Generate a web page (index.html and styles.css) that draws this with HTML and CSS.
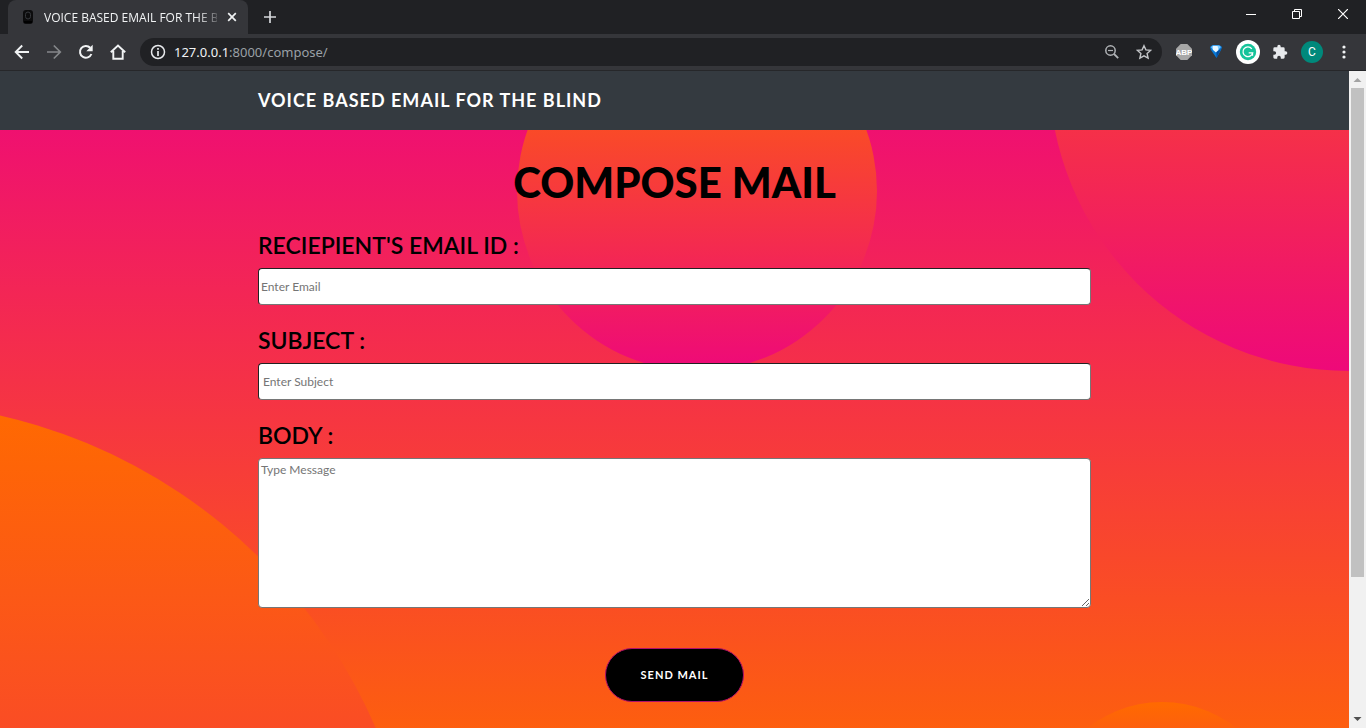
FILE: index.html
```html
<!DOCTYPE html>
<html lang="en">
<head>
<meta charset="utf-8">
<meta name="viewport" content="width=device-width, initial-scale=1">
<title>VOICE BASED EMAIL FOR THE BLIND</title>
<link rel="stylesheet" href="styles.css">
</head>
<body>
<div class="browser">
  <div class="tabstrip">
    <div class="tab">
      <svg class="favicon" width="12" height="16" viewBox="0 0 12 16"><rect x="1" y="1" width="10" height="14" rx="3" fill="#0c0c0d"/><rect x="3.500" y="3" width="5" height="7" rx="2.500" fill="none" stroke="#37393d"/><path d="M2 13h8" stroke="#000" stroke-width="2"/></svg>
      <span class="tab-title">VOICE BASED EMAIL FOR THE BLIND</span>
      <button class="icon-btn tab-close" aria-label="Close tab"><svg width="10" height="10" viewBox="0 0 10 10"><path d="M1.200 1.200l7.600 7.600M8.800 1.200l-7.600 7.600" stroke="#f1f3f4" stroke-width="1.700"/></svg></button>
    </div>
    <button class="icon-btn new-tab" aria-label="New tab"><svg width="12" height="12" viewBox="0 0 12 12"><path d="M6 0v12M0 6h12" stroke="#d5d7da" stroke-width="1.700"/></svg></button>
    <div class="window-controls">
      <button class="icon-btn" aria-label="Minimize"><svg width="10" height="10" viewBox="0 0 10 10"><path d="M0 5.500h10" stroke="#fff"/></svg></button>
      <button class="icon-btn" aria-label="Restore"><svg width="10" height="10" viewBox="0 0 10 10"><path d="M.5 2.500h7v7h-7zM2.500 2.500v-2h7v7h-2" fill="none" stroke="#fff"/></svg></button>
      <button class="icon-btn" aria-label="Close"><svg width="10" height="10" viewBox="0 0 10 10"><path d="M0 0l10 10M10 0L0 10" stroke="#fff" stroke-width="1.200"/></svg></button>
    </div>
  </div>
  <div class="toolbar">
    <div class="nav-buttons">
      <button class="icon-btn" aria-label="Back"><svg width="16" height="16" viewBox="0 0 16 16"><path d="M15 8H2M8.200 1.500L1.700 8l6.500 6.500" fill="none" stroke="#f1f3f4" stroke-width="1.900"/></svg></button>
      <button class="icon-btn" aria-label="Forward"><svg width="16" height="16" viewBox="0 0 16 16"><path d="M1 8h13M7.800 1.500L14.300 8l-6.500 6.500" fill="none" stroke="#85878a" stroke-width="1.700"/></svg></button>
      <button class="icon-btn" aria-label="Reload"><svg width="16" height="16" viewBox="0 0 16 16"><path d="M13.400 10A5.900 5.900 0 1 1 12.200 3.800" fill="none" stroke="#f1f3f4" stroke-width="2"/><path d="M14.700.8v6.400H8.300z" fill="#f1f3f4"/></svg></button>
      <button class="icon-btn" aria-label="Home"><svg width="16" height="16" viewBox="0 0 16 16"><path d="M.8 8.300L8 1.500l7.200 6.800M3.300 7v7.800h9.400V7" fill="none" stroke="#f1f3f4" stroke-width="1.900"/></svg></button>
    </div>
    <div class="omnibox">
      <svg width="16" height="16" viewBox="0 0 16 16"><circle cx="8" cy="8" r="6.500" fill="none" stroke="#e8eaed" stroke-width="1.500"/><path d="M8 7v5M8 4v1.700" stroke="#e8eaed" stroke-width="1.700"/></svg>
      <span class="url"><span class="url-host">127.0.0.1</span>:8000/compose/</span>
      <button class="icon-btn" aria-label="Zoom"><svg width="16" height="16" viewBox="0 0 16 16"><circle cx="6.500" cy="6.500" r="4.700" fill="none" stroke="#b0b3b6" stroke-width="1.500"/><path d="M10 10l4.200 4.200" stroke="#b0b3b6" stroke-width="1.800"/><path d="M4 6.500h5" stroke="#b0b3b6" stroke-width="1.200"/></svg></button>
      <button class="icon-btn" aria-label="Bookmark"><svg width="16" height="16" viewBox="0 0 16 16"><path d="M8 1.700l1.900 4.200 4.700.5-3.500 3.100 1 4.600L8 11.800l-4.100 2.300 1-4.600-3.500-3.100 4.700-.5z" fill="none" stroke="#c3c5c8" stroke-width="1.400"/></svg></button>
    </div>
    <div class="extensions">
      <button class="icon-btn" aria-label="ABP"><svg width="16" height="16" viewBox="0 0 16 16"><path d="M4.700 0h6.600L16 4.700v6.600L11.300 16H4.700L0 11.300V4.700z" fill="#a7a7a7"/><text class="abp" x="8" y="11" text-anchor="middle">ABP</text></svg></button>
      <button class="icon-btn" aria-label="Diamond extension"><svg width="16" height="16" viewBox="0 0 16 16"><path d="M2 3l2.500-2h7L14 3l-1 3-4.500 8L3 6z" fill="#0879d7"/><path d="M3 3l2-1.500h6L13 3l-3 3H5z" fill="#7ecbff"/><path d="M5 2h4.500l1 4L8 8.500 5 6z" fill="#e7f6ff"/><path d="M8.500 8L13 5l-4.500 9z" fill="#034b9d"/></svg></button>
      <button class="icon-btn" aria-label="Grammar"><svg width="24" height="24" viewBox="0 0 24 24"><circle cx="12" cy="12" r="12" fill="#fff"/><circle cx="12" cy="12" r="8.200" fill="#15c39a"/><path d="M15.800 8.800a4.900 4.900 0 1 0 .9 4h-4M16.500 12.500v3.300" fill="none" stroke="#fff" stroke-width="1.300"/></svg></button>
      <button class="icon-btn" aria-label="Extensions"><svg width="16" height="16" viewBox="0 0 24 24"><path d="M20.500 11H19V7a2 2 0 0 0-2-2h-4V3.500a2.500 2.500 0 0 0-5 0V5H4a2 2 0 0 0-2 2v3.800h1.500a2.700 2.700 0 0 1 0 5.400H2V20a2 2 0 0 0 2 2h3.800v-1.500a2.700 2.700 0 0 1 5.400 0V22H17a2 2 0 0 0 2-2v-4h1.500a2.500 2.500 0 0 0 0-5z" fill="#e8eaed"/></svg></button>
      <button class="icon-btn" aria-label="Profile"><span class="avatar">C</span></button>
      <button class="icon-btn" aria-label="Menu"><svg width="16" height="16" viewBox="0 0 16 16"><g fill="#f1f3f4"><circle cx="8" cy="3" r="1.600"/><circle cx="8" cy="8" r="1.600"/><circle cx="8" cy="13" r="1.600"/></g></svg></button>
    </div>
  </div>
  <div class="viewport">
    <div class="page">
      <header class="navbar"><div class="container"><a class="brand" href="#">VOICE BASED EMAIL FOR THE BLIND</a></div></header>
      <main class="masthead">
        <div class="circle circle-1"></div>
        <div class="circle circle-2"></div>
        <div class="circle circle-3"></div>
        <div class="circle circle-4"></div>
        <form class="container compose">
          <h1 class="title">COMPOSE MAIL</h1>
          <div class="field">
            <label class="label" for="email">RECIEPIENT'S EMAIL ID :</label>
            <input class="control" id="email" type="email" placeholder="Enter Email">
          </div>
          <div class="field">
            <label class="label" for="subject">SUBJECT :</label>
            <input class="control control-subject" id="subject" type="text" placeholder="Enter Subject">
          </div>
          <div class="field">
            <label class="label" for="body">BODY :</label>
            <textarea class="control control-body" id="body" placeholder="Type Message"></textarea>
          </div>
          <button class="send" type="submit">SEND MAIL</button>
        </form>
      </main>
    </div>
    <div class="scrollbar">
      <svg width="17" height="17" viewBox="0 0 17 17"><path d="M4.500 11L8.500 7l4 4z" fill="#a3a3a3"/></svg>
      <div class="track"><div class="thumb"></div></div>
      <svg width="17" height="17" viewBox="0 0 17 17"><path d="M4.500 6L8.500 10l4-4z" fill="#505050"/></svg>
    </div>
  </div>
</div>
</body>
</html>
```

FILE: styles.css
```css
* { box-sizing: border-box; }

body {
  margin: 0;
  font-family: Lato, "Liberation Sans", sans-serif;
  font-size: 12px;
}

.browser {
  display: flex;
  flex-direction: column;
  height: 100vh;
  overflow: hidden;
}

.icon-btn {
  display: flex;
  align-items: center;
  justify-content: center;
  flex: none;
  padding: 0;
  border: 0;
  background: none;
}

/* Browser window */
.tabstrip {
  display: flex;
  height: 34px;
  flex: none;
  padding-left: 8px;
  background: #202124;
  font-family: "Noto Sans", sans-serif;
}

.tab {
  display: flex;
  align-items: center;
  gap: 10px;
  width: 240px;
  padding: 0 11px 0 14px;
  border-radius: 8px 8px 0 0;
  background: #35363a;
}

.favicon { flex: none; }

.tab-title {
  flex: 1;
  overflow: hidden;
  color: #f1f3f4;
  font-family: "Open Sans", sans-serif;
  font-size: 12px;
  letter-spacing: normal;
  white-space: nowrap;
  -webkit-mask-image: linear-gradient(90deg, #000 88%, transparent 104%);
  mask-image: linear-gradient(90deg, #000 88%, transparent 104%);
}

.new-tab { width: 44px; }

.window-controls {
  display: flex;
  margin-left: auto;
}

.window-controls .icon-btn {
  width: 46px;
  height: 28px;
}

.toolbar {
  display: flex;
  align-items: center;
  height: 37px;
  flex: none;
  padding: 0 6px 0 14px;
  border-bottom: 1px solid #26272a;
  background: #35363a;
}

.nav-buttons {
  display: flex;
  gap: 16px;
}

.omnibox {
  display: flex;
  align-items: center;
  flex: 1;
  gap: 16px;
  height: 28px;
  margin: 0 6px 0 14px;
  padding: 0 10px;
  border-radius: 14px;
  background: #202124;
}

.url {
  flex: 1;
  margin-left: -8px;
  color: #9aa0a6;
  font-family: "Noto Sans", sans-serif;
  font-size: 13px;
}

.url-host { color: #f1f3f4; }

.extensions {
  display: flex;
  align-items: center;
}

.extensions .icon-btn { width: 32px; }

.abp {
  fill: #fff;
  font: bold 8px "Liberation Sans", sans-serif;
}

.avatar {
  width: 22px;
  border-radius: 50%;
  background: #00897b;
  color: #fff;
  font: 12px/22px Roboto, sans-serif;
}

.viewport {
  display: flex;
  flex: 1;
  min-height: 0;
}

.scrollbar {
  display: flex;
  flex-direction: column;
  width: 17px;
  flex: none;
  background: #f1f1f1;
}

.scrollbar svg { flex: none; }

.track {
  flex: 1;
  padding: 0 2px;
}

.thumb {
  height: 78.5%;
  background: #c1c1c1;
}

/* Page */
.page {
  display: grid;
  grid-template-rows: 59px auto;
  align-content: start;
  flex: 1;
  min-width: 0;
  overflow: hidden;
}

.container {
  width: 100%;
  max-width: 855px;
  margin: 0 auto;
  padding: 0 11px;
}

.navbar {
  display: flex;
  align-items: center;
  grid-area: 1 / 1;
  z-index: 1;
  padding-bottom: 2px;
  background: #343a40;
}

.brand {
  color: #fff;
  font-size: 18px;
  font-weight: 700;
  letter-spacing: 1px;
  text-decoration: none;
}

.masthead {
  position: relative;
  grid-area: 1 / 1 / 3 / 2;
  min-height: 751px;
  overflow: hidden;
  padding-top: 59px;
  background: linear-gradient(0deg, #ff6a00, #ee0979);
}

.circle {
  position: absolute;
  border-radius: 50%;
  background: linear-gradient(0deg, #ee0979, #ff6a00);
}

.circle-1 { width: 1080px; height: 1080px; bottom: -660px; left: -660px; }
.circle-2 { width: 600px; height: 600px; top: -300px; right: -300px; }
.circle-3 { width: 240px; height: 240px; bottom: -120px; right: 5%; }
.circle-4 { width: 360px; height: 360px; top: -60px; right: 35%; }

.compose {
  position: relative;
  display: flex;
  flex-direction: column;
  gap: 20px;
  padding-top: 24px;
}

.title {
  margin: 0;
  color: #000;
  font-size: 42px;
  font-weight: 900;
  line-height: 56px;
  text-align: center;
}

.field {
  display: flex;
  flex-direction: column;
  gap: 8px;
}

.label {
  color: #000;
  font-size: 23px;
  font-weight: 600;
  line-height: 30px;
}

.control {
  width: 100%;
  height: 37px;
  padding: 1px 2px;
  border: 1px solid #767676;
  border-top-color: #222;
  border-left-color: #222;
  border-radius: 4px;
  background: #fff;
  font: 12px Lato, sans-serif;
}

.control::placeholder { color: #757575; }

.control-subject { padding-left: 4px; }

.control-body {
  height: 150px;
  padding: 2px;
  border-color: #767676;
  line-height: 18px;
  resize: vertical;
}

.send {
  align-self: center;
  margin-top: 20px;
  padding: 18px 35px;
  border: 1px solid #b0106a;
  border-radius: 60px;
  background: #000;
  color: #fff;
  font: 700 11px/16px Lato, sans-serif;
  letter-spacing: 1px;
}
```
